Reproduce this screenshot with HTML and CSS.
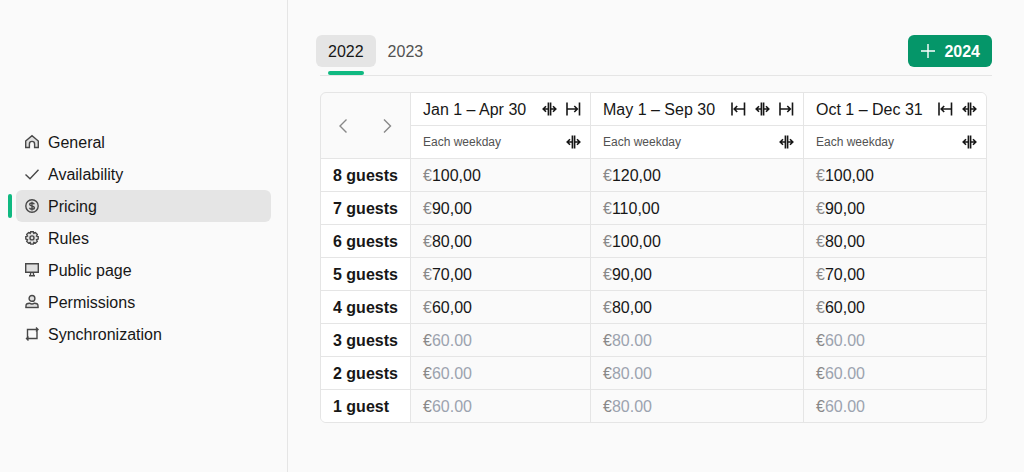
FILE: index.html
```html
<!DOCTYPE html>
<html lang="en">
<head>
<meta charset="utf-8">
<meta name="viewport" content="width=device-width, initial-scale=1">
<title>Pricing</title>
<link rel="stylesheet" href="styles.css">
</head>
<body>
<svg class="sprite" aria-hidden="true">
  <symbol id="start" viewBox="0 0 16 16"><path d="M2 1.500v13M14.500 1.500v13M14 8H4.500M7.200 5 4.200 8l3 3"/></symbol>
  <symbol id="end" viewBox="0 0 16 16"><path d="M2 1.500v13M14.500 1.500v13M2.500 8H12M9.300 5l3 3-3 3"/></symbol>
  <symbol id="split" viewBox="0 0 16 16"><path d="M7.400 1.500v13M9.600 1.500v13M7 8H2.500M9.500 8h5M5 5.200 2.200 8 5 10.800M12 5.200 14.800 8 12 10.800"/></symbol>
</svg>
<div class="app">
  <nav class="sidebar" aria-label="Settings">
    <a class="nav-item" href="#general"><svg class="icon" viewBox="0 0 16 16"><path class="tint" d="M1.700 7 8 1.700 14.300 7v6.500h-3.700V10a2.600 2.600 0 0 0-5.200 0v3.500H1.700z"/></svg>General</a>
    <a class="nav-item" href="#availability"><svg class="icon" viewBox="0 0 16 16"><path d="m1.500 8.500 4.500 4.300 8.500-9"/></svg>Availability</a>
    <a class="nav-item active" href="#pricing" aria-current="page"><svg class="icon" viewBox="0 0 16 16"><circle class="tint" cx="8" cy="8" r="6.200"/><path d="M10.300 6.300C10 5.300 9.100 5 8 5c-1.300 0-2.300.5-2.300 1.500 0 2.100 4.700.9 4.700 3.200 0 1-1.100 1.500-2.400 1.500-1.200 0-2.200-.4-2.500-1.400M8 3.700v8.700"/></svg>Pricing</a>
    <a class="nav-item" href="#rules"><svg class="icon" viewBox="0 0 16 16"><path class="tint" d="M6.700 1.700h2.600l.5 1.500 1.600-.7 1.900 1.900-.7 1.600 1.600.6v2.500l-1.600.6.7 1.700-1.900 1.800-1.600-.7-.5 1.600H6.700l-.5-1.600-1.600.7-1.900-1.800.7-1.700-1.600-.6V6.600L3.400 6l-.7-1.600 1.900-1.900 1.600.7z"/><circle cx="8" cy="7.900" r="2"/></svg>Rules</a>
    <a class="nav-item" href="#public-page"><svg class="icon" viewBox="0 0 16 16"><path class="tint" d="M1.700 1.700h12.600v8.500H1.700z"/><path d="M6.800 10.300 6.300 13.500M9.200 10.300l.5 3.200M5 13.700h6"/></svg>Public page</a>
    <a class="nav-item" href="#permissions"><svg class="icon" viewBox="0 0 16 16"><circle class="tint" cx="8" cy="4.400" r="2.900"/><path class="tint" d="M2 13.500v-1.700c0-1.700 1.500-2.600 3.500-2.600.8.500 1.600.8 2.500.8s1.700-.3 2.500-.8c2 0 3.500.9 3.500 2.600v1.700"/><path d="M1.300 13.500h13.400"/></svg>Permissions</a>
    <a class="nav-item" href="#synchronization"><svg class="icon" viewBox="0 0 16 16"><path d="M3.500 11V3.500H14M12 1.500l2 2-2 2M13 5v7.500H2.500M4.500 10.500l-2 2 2 2"/></svg>Synchronization</a>
  </nav>
  <main class="main">
    <header class="toolbar">
      <nav class="tabs" aria-label="Year">
        <a class="tab current" href="#2022" aria-current="true">2022</a>
        <a class="tab" href="#2023">2023</a>
      </nav>
      <button class="add" type="button"><svg class="icon" viewBox="0 0 16 16"><path d="M8 1v14M1 8h14"/></svg>2024</button>
    </header>
    <table class="prices">
      <colgroup><col class="col-guests"><col class="col-spring"><col class="col-summer"><col class="col-autumn"></colgroup>
      <thead>
        <tr>
          <td class="pager" rowspan="2"><div class="pager-row">
            <button type="button" aria-label="Previous"><svg class="icon" viewBox="0 0 16 16"><path d="M11.500 1.500 5 8l6.500 6.500"/></svg></button>
            <button type="button" aria-label="Next"><svg class="icon" viewBox="0 0 16 16"><path d="m4 1.500 6.500 6.500L4 14.500"/></svg></button>
          </div></td>
          <th scope="col"><div class="head">Jan 1 – Apr 30<span class="tools"><button type="button" aria-label="Split season"><svg class="icon"><use href="#split"/></svg></button><button type="button" aria-label="Extend end"><svg class="icon"><use href="#end"/></svg></button></span></div></th>
          <th scope="col"><div class="head">May 1 – Sep 30<span class="tools"><button type="button" aria-label="Extend start"><svg class="icon"><use href="#start"/></svg></button><button type="button" aria-label="Split season"><svg class="icon"><use href="#split"/></svg></button><button type="button" aria-label="Extend end"><svg class="icon"><use href="#end"/></svg></button></span></div></th>
          <th scope="col"><div class="head">Oct 1 – Dec 31<span class="tools"><button type="button" aria-label="Extend start"><svg class="icon"><use href="#start"/></svg></button><button type="button" aria-label="Split season"><svg class="icon"><use href="#split"/></svg></button></span></div></th>
        </tr>
        <tr>
          <th scope="col"><div class="head sub">Each weekday<span class="tools"><button type="button" aria-label="Split weekdays"><svg class="icon"><use href="#split"/></svg></button></span></div></th>
          <th scope="col"><div class="head sub">Each weekday<span class="tools"><button type="button" aria-label="Split weekdays"><svg class="icon"><use href="#split"/></svg></button></span></div></th>
          <th scope="col"><div class="head sub">Each weekday<span class="tools"><button type="button" aria-label="Split weekdays"><svg class="icon"><use href="#split"/></svg></button></span></div></th>
        </tr>
      </thead>
      <tbody>
        <tr><th scope="row">8 guests</th><td><label class="price">€<input value="100,00"></label></td><td><label class="price">€<input value="120,00"></label></td><td><label class="price">€<input value="100,00"></label></td></tr>
        <tr><th scope="row">7 guests</th><td><label class="price">€<input value="90,00"></label></td><td><label class="price">€<input value="110,00"></label></td><td><label class="price">€<input value="90,00"></label></td></tr>
        <tr><th scope="row">6 guests</th><td><label class="price">€<input value="80,00"></label></td><td><label class="price">€<input value="100,00"></label></td><td><label class="price">€<input value="80,00"></label></td></tr>
        <tr><th scope="row">5 guests</th><td><label class="price">€<input value="70,00"></label></td><td><label class="price">€<input value="90,00"></label></td><td><label class="price">€<input value="70,00"></label></td></tr>
        <tr><th scope="row">4 guests</th><td><label class="price">€<input value="60,00"></label></td><td><label class="price">€<input value="80,00"></label></td><td><label class="price">€<input value="60,00"></label></td></tr>
        <tr><th scope="row">3 guests</th><td><label class="price">€<input placeholder="60.00"></label></td><td><label class="price">€<input placeholder="80.00"></label></td><td><label class="price">€<input placeholder="60.00"></label></td></tr>
        <tr><th scope="row">2 guests</th><td><label class="price">€<input placeholder="60.00"></label></td><td><label class="price">€<input placeholder="80.00"></label></td><td><label class="price">€<input placeholder="60.00"></label></td></tr>
        <tr><th scope="row">1 guest</th><td><label class="price">€<input placeholder="60.00"></label></td><td><label class="price">€<input placeholder="80.00"></label></td><td><label class="price">€<input placeholder="60.00"></label></td></tr>
      </tbody>
    </table>
  </main>
</div>
</body>
</html>
```
FILE: styles.css
```css
* { box-sizing: border-box; }
body {
  margin: 0;
  background: #fafafa;
  color: #171717;
  font: 16px/24px "Liberation Sans", Arial, sans-serif;
}
button, input { font: inherit; color: inherit; border: 0; padding: 0; margin: 0; background: none; }
button { cursor: pointer; }
a { color: inherit; text-decoration: none; }
.sprite { display: none; }
.icon {
  display: block;
  flex: none;
  align-self: center;
  width: 16px;
  height: 16px;
  fill: none;
  stroke: currentColor;
  stroke-width: 1.4;
}
.tint { fill: #e0e0e0; }

.app { display: flex; min-height: 100vh; }
.sidebar {
  flex: none;
  width: 288px;
  display: flex;
  flex-direction: column;
  justify-content: center;
  padding: 4px 16px 0;
  border-right: 1px solid #e5e5e5;
}
.nav-item {
  position: relative;
  display: flex;
  align-items: flex-start;
  gap: 8px;
  height: 32px;
  padding: 0 8px;
  border-radius: 6px;
  line-height: 34px;
}
.nav-item .icon { color: #484848; }
.active { background: #e5e5e5; }
.active::before {
  content: "";
  position: absolute;
  left: -8px;
  top: 4px;
  width: 4px;
  height: 24px;
  border-radius: 2px;
  background: #10b981;
}

.main { flex: 1; min-width: 0; padding: 35px 32px 32px; }
.toolbar {
  display: flex;
  justify-content: space-between;
  padding-bottom: 8px;
  margin-bottom: 16px;
  border-bottom: 1px solid #e5e5e5;
}
.tabs { display: flex; margin-left: -4px; }
.tab {
  position: relative;
  height: 32px;
  padding: 0 12px;
  border-radius: 6px;
  color: #525252;
  line-height: 34px;
}
.tab.current { background: #e5e5e5; color: #171717; }
.current::after {
  content: "";
  position: absolute;
  left: 12px;
  right: 12px;
  bottom: -8px;
  height: 4px;
  border-radius: 2px;
  background: #10b981;
}
.add {
  display: flex;
  align-items: flex-start;
  gap: 8px;
  height: 32px;
  padding: 0 12px;
  border-radius: 6px;
  background: #059669;
  color: #fff;
  font-weight: bold;
  line-height: 34px;
}

.prices {
  border: 1px solid #e5e5e5;
  border-radius: 6px;
  border-spacing: 0;
  overflow: hidden;
}
.col-guests { width: 90px; }
.col-spring { width: 180px; }
.col-summer { width: 213px; }
.col-autumn { width: 182px; }
.prices th, .prices td {
  height: 33px;
  padding: 0;
  border-right: 1px solid #e5e5e5;
  border-bottom: 1px solid #e5e5e5;
  text-align: left;
  white-space: nowrap;
}
.prices tr > :last-child { border-right: 0; }
.prices tbody tr:last-child > * { height: 32px; border-bottom: 0; }
.prices th { background: #fff; }
.prices tbody th { padding: 2px 12px 0; }
.prices tbody td { padding-top: 2px; }
.pager-row { display: flex; justify-content: space-between; padding: 0 14px; color: #888; }
.head {
  display: flex;
  align-items: flex-start;
  justify-content: space-between;
  height: 32px;
  padding: 0 9px 0 12px;
  font-weight: normal;
  line-height: 34px;
}
.sub { color: #525252; font-size: 12px; line-height: 32px; }
.tools { display: flex; align-self: center; gap: 8px; color: #171717; }
.tools .icon { stroke-width: 1.6; }
.price { display: flex; padding: 0 12px; color: #888; }
.price input { flex: 1; min-width: 0; width: 0; height: 24px; color: #171717; outline-offset: 2px; }
.price input::placeholder { color: #9ca3af; opacity: 1; }
```
